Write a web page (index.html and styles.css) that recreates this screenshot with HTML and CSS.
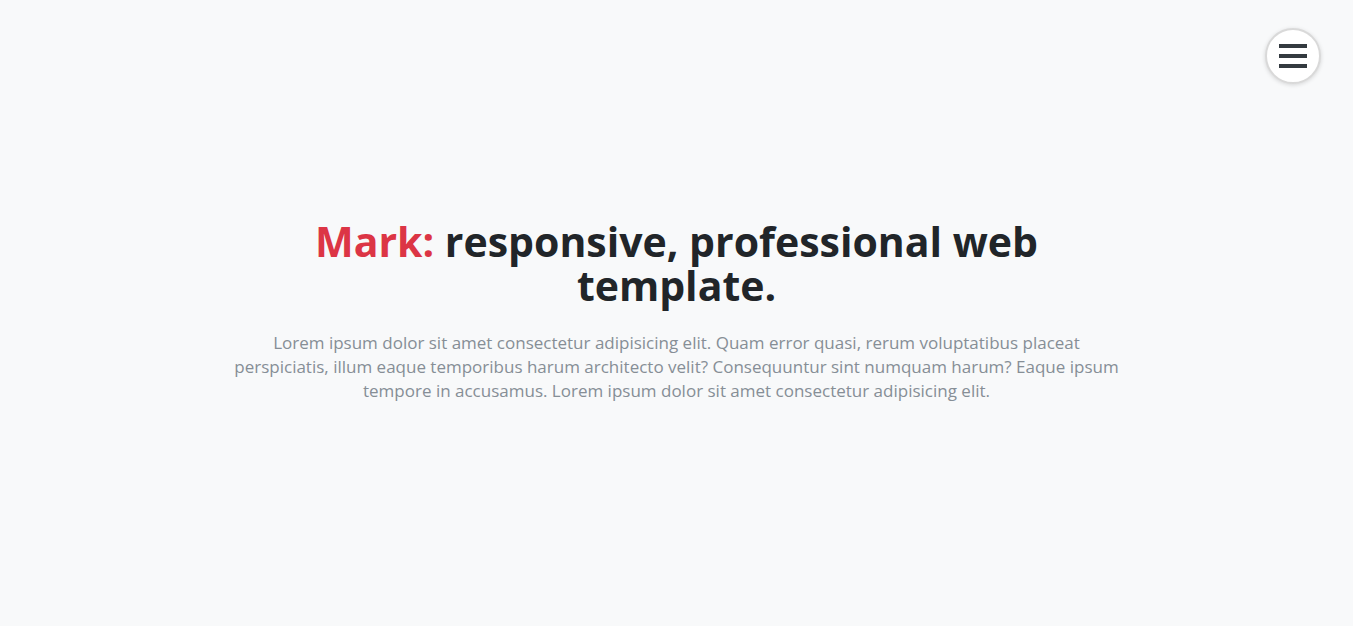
FILE: index.html
```html
<!DOCTYPE html>
<html lang="en">
<head>
<meta charset="utf-8">
<title>Mark</title>
<link rel="stylesheet" href="styles.css">
</head>
<body>
<button class="menu-toggle" aria-label="Menu">
  <span class="bar"></span>
  <span class="bar"></span>
  <span class="bar"></span>
</button>
<header class="hero">
  <div class="hero-inner">
    <h1 class="hero-title"><span class="accent">Mark:</span> responsive, professional web template.</h1>
    <p class="hero-text">Lorem ipsum dolor sit amet consectetur adipisicing elit. Quam error quasi, rerum voluptatibus placeat perspiciatis, illum eaque temporibus harum architecto velit? Consequuntur sint numquam harum? Eaque ipsum tempore in accusamus. Lorem ipsum dolor sit amet consectetur adipisicing elit.</p>
  </div>
</header>
</body>
</html>
```
FILE: styles.css
```css
html { background: #f8f9fa; }
body {
  margin: 0;
  background: #f8f9fa;
  font-family: "Open Sans", "Liberation Sans", sans-serif;
  color: #212529;
}

.menu-toggle {
  position: fixed;
  top: 28px;
  right: 32px;
  width: 56px;
  height: 56px;
  border-radius: 50%;
  background: #ffffff;
  border: 2px solid #d9d9d9;
  box-shadow: 0 1px 4px rgba(0,0,0,0.15);
  display: flex;
  flex-direction: column;
  align-items: center;
  justify-content: center;
  gap: 6px;
  padding: 0;
  cursor: pointer;
}
.menu-toggle .bar {
  display: block;
  width: 28px;
  height: 4px;
  background: #343a40;
}

.hero {
  min-height: 100vh;
  display: flex;
  align-items: center;
  justify-content: center;
}
.hero-inner {
  width: 900px;
  text-align: center;
  padding-bottom: 4px;
}
.hero-title {
  margin: 0 auto 24px;
  max-width: 780px;
  font-size: 41px;
  line-height: 44px;
  font-weight: 700;
  color: #212529;
}
.accent { color: #dc3545; }
.hero-text {
  margin: 0;
  font-size: 17px;
  line-height: 24px;
  color: #868e96;
}
```
